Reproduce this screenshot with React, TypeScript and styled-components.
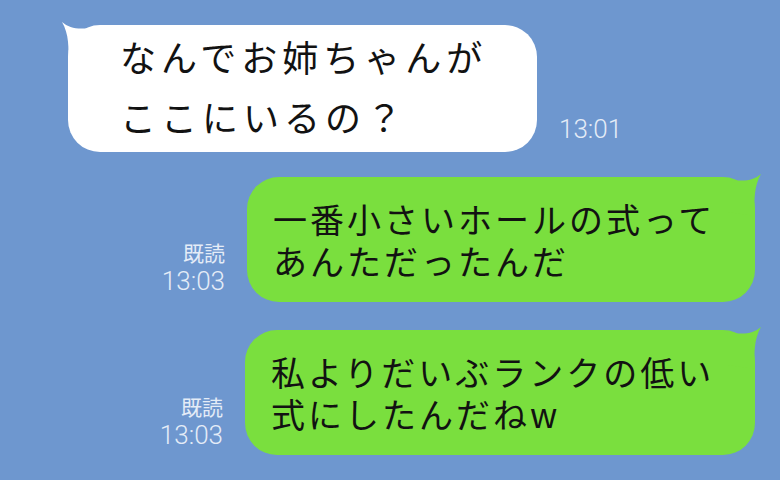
import React from "react";
import styled, { createGlobalStyle } from "styled-components";

const Global = createGlobalStyle`
  html, body { margin: 0; padding: 0; }
  body {
    width: 780px;
    height: 480px;
    overflow: hidden;
    background: #6e97cf;
    font-family: "Noto Sans CJK JP", "Noto Sans", sans-serif;
  }
`;

const Page = styled.div`
  width: 780px;
  height: 480px;
  box-sizing: border-box;
  background: #6e97cf;
  display: flex;
  flex-direction: column;
  padding-top: 25px;
`;

const Row = styled.div<{ $out?: boolean; $mt: number }>`
  display: flex;
  align-items: flex-end;
  justify-content: ${(p) => (p.$out ? "flex-end" : "flex-start")};
  gap: ${(p) => (p.$out ? 22 : 22)}px;
  margin-top: ${(p) => p.$mt}px;
  padding-left: ${(p) => (p.$out ? 0 : 68)}px;
  padding-right: ${(p) => (p.$out ? 25 : 0)}px;
`;

const Bubble = styled.div<{ $out?: boolean; $w: number; $h: number }>`
  position: relative;
  box-sizing: border-box;
  width: ${(p) => p.$w}px;
  height: ${(p) => p.$h}px;
  border-radius: 32px;
  background: ${(p) => (p.$out ? "#7adf3e" : "#ffffff")};
  display: flex;
  flex-direction: column;
  justify-content: center;
  gap: ${(p) => (p.$out ? 5 : 20)}px;
  padding-left: ${(p) => (p.$out ? 26 : 52)}px;
  padding-bottom: ${(p) => (p.$out ? 0 : 4)}px;
  color: #121212;
  font-size: ${(p) => (p.$out ? 34 : 36)}px;
  letter-spacing: ${(p) => (p.$out ? 3 : 5)}px;
  white-space: nowrap;
`;

const Line = styled.div`
  line-height: 1.1;
`;

const Tail = styled.svg<{ $out?: boolean }>`
  position: absolute;
  top: -5px;
  width: 40px;
  height: 44px;
  ${(p) =>
    p.$out
      ? "right: -8px; transform: scaleX(-1);"
      : "left: -8px;"}
`;

const Meta = styled.div<{ $pb: number }>`
  display: flex;
  flex-direction: column;
  align-items: flex-end;
  gap: 3px;
  padding-bottom: ${(p) => p.$pb}px;
  color: #e4ecf7;
`;

const Read = styled.div`
  font-family: "Noto Sans CJK JP", "Noto Sans", sans-serif;
  font-size: 21px;
  line-height: 22px;
  font-weight: 400;
`;

const Time = styled.div`
  font-family: Roboto, "Liberation Sans", sans-serif;
  font-weight: 300;
  font-size: 26px;
  line-height: 30px;
`;

function BubbleTail({ out, color }: { out?: boolean; color: string }) {
  return (
    <Tail $out={out} viewBox="0 0 40 44">
      <path
        d="M2 2 C 10 9, 20 10, 36 7 L 36 40 L 8 44 C 9 28, 9 14, 2 2 Z"
        fill={color}
      />
    </Tail>
  );
}

export default function App() {
  return (
    <>
      <Global />
      <Page>
        <Row $mt={0}>
          <Bubble $w={469} $h={127}>
            <BubbleTail color="#ffffff" />
            <Line>なんでお姉ちゃんが</Line>
            <Line>ここにいるの？</Line>
          </Bubble>
          <Meta $pb={8}>
            <Time>13:01</Time>
          </Meta>
        </Row>
        <Row $out $mt={25}>
          <Meta $pb={6}>
            <Read>既読</Read>
            <Time>13:03</Time>
          </Meta>
          <Bubble $out $w={508} $h={125}>
            <BubbleTail out color="#7adf3e" />
            <Line>一番小さいホールの式って</Line>
            <Line>あんただったんだ</Line>
          </Bubble>
        </Row>
        <Row $out $mt={28}>
          <Meta $pb={5}>
            <Read>既読</Read>
            <Time>13:03</Time>
          </Meta>
          <Bubble $out $w={510} $h={125}>
            <BubbleTail out color="#7adf3e" />
            <Line>私よりだいぶランクの低い</Line>
            <Line>式にしたんだねw</Line>
          </Bubble>
        </Row>
      </Page>
    </>
  );
}
